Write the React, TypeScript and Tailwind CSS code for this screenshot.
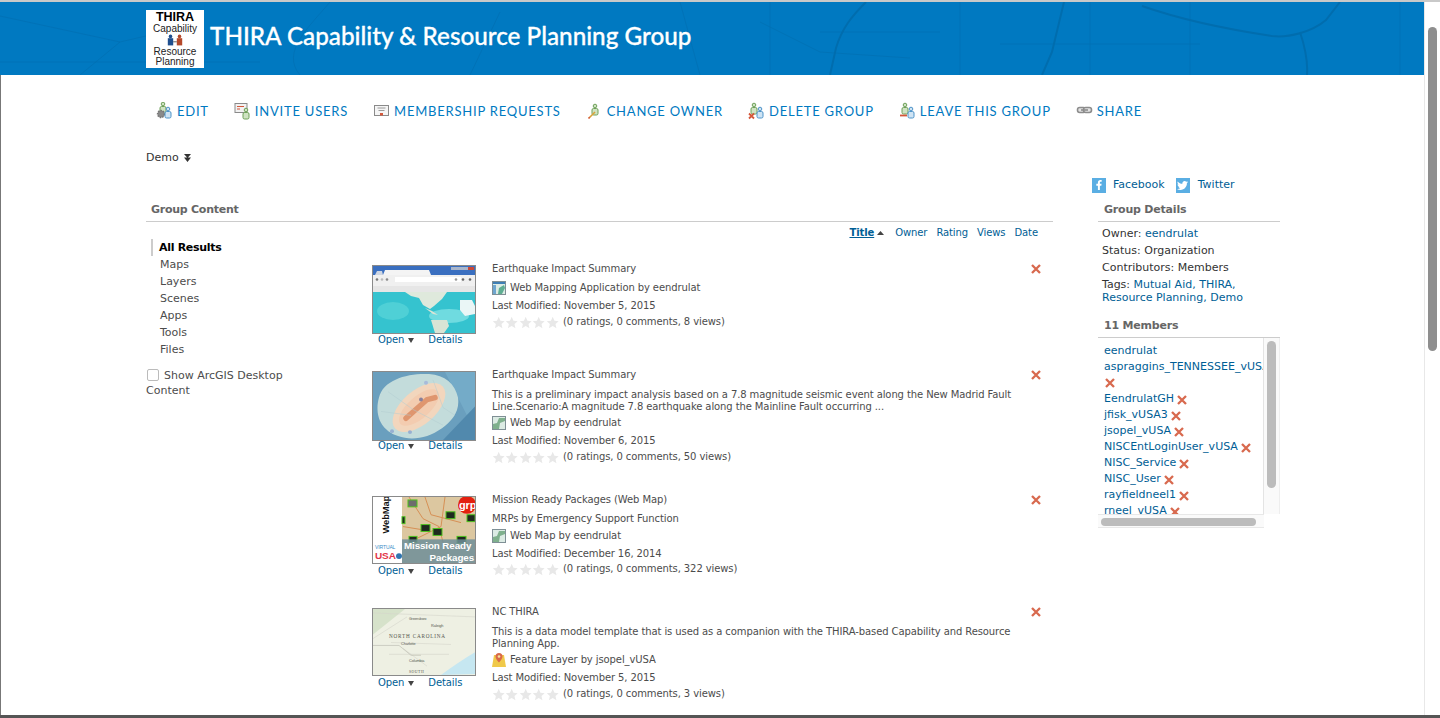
import { FaFacebookF, FaTwitter } from "react-icons/fa"

const Persona = ({ x, y, tipo }: { x: number; y: number; tipo: "verde" | "azul" }) => {
    const borde = tipo === "verde" ? "#6fa15a" : "#4f94c9"
    const relleno = tipo === "verde" ? "#cfe3c2" : "#cfe4f4"
    return (
        <g stroke={borde} fill={relleno} strokeWidth="1">
            <circle cx={x + 3} cy={y + 2} r="1.8" />
            <rect x={x} y={y + 4.5} width="6" height="6.5" rx="1.5" />
        </g>
    )
}

const Tache = ({ x, y, s = 5 }: { x: number; y: number; s?: number }) => (
    <path d={`M${x} ${y}L${x + s} ${y + s}M${x + s} ${y}L${x} ${y + s}`} stroke="#d4573a" strokeWidth="1.8" />
)

const IconoNav = ({ tipo }: { tipo: string }) => (
    <svg width="18" height="18" viewBox="0 0 18 18" fill="none" className="-mt-[2px] shrink-0">
        {tipo === "edit" && (
            <>
                <Persona x={4} y={0} tipo="verde" />
                <circle cx="5" cy="12" r="3.4" fill="#8a8a8a" stroke="#777" strokeDasharray="1.5 1" strokeWidth="1.6" />
                <Persona x={9} y={5} tipo="azul" />
            </>
        )}
        {tipo === "invite" && (
            <>
                <rect x="1" y="1.5" width="12" height="9" fill="#f2f2f2" stroke="#8a8a8a" />
                <path d="M3 4.5h7M3 7h3" stroke="#d4573a" />
                <Persona x={9} y={6} tipo="verde" />
            </>
        )}
        {tipo === "requests" && (
            <>
                <rect x="1.5" y="3.5" width="14" height="10" fill="#f5f5f5" stroke="#8a8a8a" />
                <path d="M4.5 6h8M5.5 8.5h6" stroke="#9a9a9a" />
                <rect x="7" y="11" width="3" height="2.5" fill="#d4573a" />
            </>
        )}
        {tipo === "owner" && (
            <>
                <Persona x={6} y={2} tipo="verde" />
                <path d="M3 16l6-6" stroke="#d8a13a" strokeWidth="1.6" />
                <path d="M2.5 16.5l1.2-1.2" stroke="#d4573a" strokeWidth="1.6" />
            </>
        )}
        {tipo === "delete" && (
            <>
                <Persona x={3} y={1} tipo="verde" />
                <Persona x={9} y={5} tipo="azul" />
                <Tache x={1} y={11.5} />
            </>
        )}
        {tipo === "leave" && (
            <>
                <Persona x={3} y={1} tipo="verde" />
                <Persona x={9} y={5} tipo="azul" />
                <path d="M1 13.5h7" stroke="#d4573a" strokeWidth="1.8" />
            </>
        )}
        {tipo === "share" && (
            <g stroke="#8c8c8c" strokeWidth="1.6" fill="#e3e3e3">
                <rect x="1.5" y="5.5" width="8" height="5" rx="2.2" />
                <rect x="7.5" y="5.5" width="8" height="5" rx="2.2" />
                <path d="M5 8h7" />
            </g>
        )}
    </svg>
)

const acciones = [
    { id: "edit", texto: "EDIT" },
    { id: "invite", texto: "INVITE USERS" },
    { id: "requests", texto: "MEMBERSHIP REQUESTS" },
    { id: "owner", texto: "CHANGE OWNER" },
    { id: "delete", texto: "DELETE GROUP" },
    { id: "leave", texto: "LEAVE THIS GROUP" },
    { id: "share", texto: "SHARE" },
]

const Equis = ({ className }: { className?: string }) => (
    <svg width="10" height="10" viewBox="0 0 10 10" className={className}>
        <path d="M1 1l8 8M9 1l-8 8" stroke="#d8694e" strokeWidth="2.3" />
    </svg>
)

const Estrellas = () => (
    <span className="flex w-[67px] shrink-0">
        {[0, 1, 2, 3, 4].map((i) => (
            <svg key={i} width="13.4" height="13" viewBox="0 0 24 24" fill="#e8e8e8">
                <path d="M12 1.5l3.2 7.2 7.8.8-5.8 5.2 1.7 7.7L12 18.4l-6.9 4 1.7-7.7L1 9.5l7.8-.8z" />
            </svg>
        ))}
    </span>
)

const IconoTipo = ({ tipo }: { tipo: string }) => {
    if (tipo === "layer") {
        return (
            <svg width="14" height="16" viewBox="0 0 14 16" className="shrink-0">
                <path d="M2 3h10l2 12H0z" fill="#f0c94a" />
                <path d="M7 1a3.5 3.5 0 0 1 3.5 3.5C10.500 7 7 10.500 7 10.500S3.500 7 3.500 4.500A3.500 3.500 0 0 1 7 1z" fill="#d9694a" />
                <circle cx="7" cy="4.500" r="1.300" fill="#f6e2a0" />
            </svg>
        )
    }
    return (
        <svg width="14" height="14" viewBox="0 0 14 14" className="shrink-0">
            <rect x="0.500" y="0.500" width="13" height="13" fill="#dcebe4" stroke="#7f8f95" />
            {tipo === "app" && <rect x="1" y="1" width="12" height="2" fill="#3f7fb5" />}
            <path d={tipo === "app" ? "M6 13l1-6 5-3 1 3-3 6z" : "M1 13V8l4-1 2-5 6 0v3l-5 2-1 6z"} fill={tipo === "app" ? "#5fae92" : "#7fb08d"} />
            {tipo === "app" && <rect x="1" y="4" width="3" height="9" fill="#6fa6cf" />}
        </svg>
    )
}

const MiniaturaNavegador = () => (
    <svg viewBox="0 0 102 67" preserveAspectRatio="none" className="block h-full w-full">
        <rect width="102" height="67" fill="#35c3cf" />
        <rect width="102" height="9" fill="#3a6fc0" />
        <rect x="78" y="1" width="23" height="3" fill="#a9b6cc" />
        <rect x="95" y="1" width="6" height="3" fill="#c9483a" />
        <path d="M2 9l2-4h5l1 4z" fill="#cfd6e2" />
        <path d="M10 9l2-5h44l2 5z" fill="#f4f4f4" />
        <rect y="9" width="102" height="11" fill="#f0f0f0" />
        <rect x="22" y="11" width="66" height="5" fill="#fff" />
        <circle cx="4" cy="13.500" r="1.300" fill="#777" />
        <circle cx="9" cy="13.500" r="1.300" fill="#bbb" />
        <circle cx="14" cy="13.500" r="1.300" fill="#888" />
        <circle cx="83" cy="13.500" r="1.300" fill="#999" />
        <circle cx="90" cy="13.500" r="1.300" fill="#666" />
        <circle cx="97" cy="13.500" r="1.300" fill="#666" />
        <rect y="20" width="102" height="6" fill="#e6e6e6" />
        <ellipse cx="20" cy="45" rx="16" ry="9" fill="#4fd0d6" />
        <ellipse cx="76" cy="50" rx="20" ry="7" fill="#6fdbe0" />
        <path d="M32 26h42l-5 7-8 7-4 3-7-4-4-7-8-2z" fill="#dfe9dc" />
        <path d="M52 42l7 3 6 4-5-1z" fill="#d9e4d5" />
        <path d="M58 54h16l2 6-5 7H62z" fill="#d9e4d5" />
        <path d="M87 34h12l3 6v8l-10 2-5-6z" fill="#eaf6f6" />
    </svg>
)

const MiniaturaImpacto = () => (
    <svg viewBox="0 0 102 69" preserveAspectRatio="none" className="block h-full w-full">
        <rect width="102" height="69" fill="#6a9fbe" />
        <path d="M72 0h30v60z" fill="#74abc8" />
        <path d="M102 35v34H70z" fill="#5189ad" />
        <path d="M6 26C10 8 34 1 56 2c16 1 26 10 29 24 2 14-6 24-16 31-14 10-30 13-44 8C5 58 2 40 6 26z" fill="#c3dcdb" />
        <ellipse cx="46" cy="36" rx="32" ry="17" transform="rotate(-42 46 36)" fill="#f2d6bd" />
        <ellipse cx="46" cy="36" rx="25" ry="11" transform="rotate(-42 46 36)" fill="#f3ccb0" />
        <path d="M33 47l21-19 8-2" stroke="#df966f" strokeWidth="5.500" strokeLinecap="round" fill="none" />
        <circle cx="48" cy="28" r="2" fill="#8a809a" />
        <circle cx="53" cy="11" r="2" fill="#a8bbda" />
        <circle cx="19" cy="60" r="2" fill="#98b0d2" />
        <circle cx="37" cy="61" r="2" fill="#98b0d2" />
        <path d="M15 20l25 18 30 16M60 8l10 28 12 8M8 40l30 4" stroke="#b3ccd0" strokeWidth=".5" fill="none" />
    </svg>
)

const MiniaturaPaquetes = () => (
    <svg viewBox="0 0 102 67" preserveAspectRatio="none" className="block h-full w-full">
        <rect width="102" height="67" fill="#fff" />
        <rect x="29" width="73" height="67" fill="#dcc7a0" />
        <path d="M36 0l14 22 16 8 6 24M52 0l6 18 30 8M72 0l-4 30-24 12M30 30l24 4" stroke="#d68f55" strokeWidth="1" fill="none" />
        <g fill="#1f2a1f" stroke="#4fc21f" strokeWidth="1">
            <rect x="35" y="3" width="9" height="7" fill="#6d6d6d" />
            <rect x="29" y="20" width="3" height="7" />
            <rect x="48" y="28" width="9" height="7" />
            <rect x="60" y="32" width="9" height="7" />
            <rect x="73" y="15" width="9" height="7" />
            <rect x="84" y="40" width="9" height="7" />
            <rect x="94" y="18" width="8" height="7" />
            <rect x="36" y="40" width="8" height="6" />
        </g>
        <rect x="29" y="43" width="73" height="24" fill="#6f8e99" opacity=".85" />
        <circle cx="94" cy="8" r="9" fill="#e3200f" />
        <text x="86" y="12" fontSize="11" fontWeight="700" fill="#fff" className="font-['Liberation_Sans',sans-serif]">grp</text>
        <text x="31" y="53" fontSize="9.800" fontWeight="700" fill="#fff" className="font-['Liberation_Sans',sans-serif]">Mission Ready</text>
        <text x="101" y="65" fontSize="9.800" fontWeight="700" fill="#fff" textAnchor="end" className="font-['Liberation_Sans',sans-serif]">Packages</text>
        <text transform="translate(16 37) rotate(-90)" fontSize="9.500" fontWeight="700" fill="#111" className="font-['Liberation_Sans',sans-serif]">WebMap</text>
        <text x="2" y="53" fontSize="5" fill="#3b8dc8" className="font-['Liberation_Sans',sans-serif]">VIRTUAL</text>
        <text x="2" y="63" fontSize="10" fontWeight="700" fill="#e2364a" className="font-['Liberation_Sans',sans-serif]">USA</text>
        <circle cx="26" cy="60" r="3" fill="#2f75b0" />
    </svg>
)

const MiniaturaCarolina = () => (
    <svg viewBox="0 0 102 67" preserveAspectRatio="none" className="block h-full w-full">
        <rect width="102" height="67" fill="#eef0e3" />
        <path d="M0 26L32 0H0z" fill="#d6e2ca" />
        <path d="M102 66V44C92 50 80 58 68 67z" fill="#c6e7f1" />
        <path d="M0 30L34 8M0 4l102 4M18 34l60 2M30 40l24 18M16 46h60" stroke="#d5d5ca" strokeWidth=".6" fill="none" />
        <path d="M0 37h26l12 10h10" stroke="#b8b8ac" strokeWidth=".6" fill="none" />
        <text x="16" y="29" fontSize="5.200" letterSpacing=".8" fill="#55564f" className="font-['Liberation_Serif',serif]">NORTH CAROLINA</text>
        <text x="28" y="37" fontSize="3.800" fill="#55564f" className="font-['Liberation_Sans',sans-serif]">Charlotte</text>
        <text x="58" y="18" fontSize="3.800" fill="#55564f" className="font-['Liberation_Sans',sans-serif]">Raleigh</text>
        <text x="36" y="11" fontSize="3.500" fill="#55564f" className="font-['Liberation_Sans',sans-serif]">Greensboro</text>
        <text x="36" y="54" fontSize="3.800" fill="#55564f" className="font-['Liberation_Sans',sans-serif]">Columbia</text>
        <text x="36" y="65" fontSize="3.800" letterSpacing=".5" fill="#55564f" className="font-['Liberation_Serif',serif]">SOUTH</text>
    </svg>
)

const resultados = [
    {
        titulo: "Earthquake Impact Summary",
        miniatura: <MiniaturaNavegador />,
        iconoTipo: "app",
        tipo: "Web Mapping Application by eendrulat",
        fecha: "November 5, 2015",
        stats: "(0 ratings, 0 comments, 8 views)",
        alto: "h-[69px]",
        margenDesc: "",
        margenTipo: "mt-[5px]",
        margenNota: "mt-[2px]",
        finTexto: "pb-[32px]",
    },
    {
        titulo: "Earthquake Impact Summary",
        miniatura: <MiniaturaImpacto />,
        desc: "This is a preliminary impact analysis based on a 7.8 magnitude seismic event along the New Madrid Fault Line.Scenario:A magnitude 7.8 earthquake along the Mainline Fault occurring ...",
        iconoTipo: "map",
        tipo: "Web Map by eendrulat",
        fecha: "November 6, 2015",
        stats: "(0 ratings, 0 comments, 50 views)",
        alto: "h-[70px]",
        margenDesc: "mt-[7px]",
        margenTipo: "mt-[3px]",
        margenNota: "mt-[2px]",
        finTexto: "pb-[29px]",
    },
    {
        titulo: "Mission Ready Packages (Web Map)",
        miniatura: <MiniaturaPaquetes />,
        desc: "MRPs by Emergency Support Function",
        iconoTipo: "map",
        tipo: "Web Map by eendrulat",
        fecha: "December 16, 2014",
        stats: "(0 ratings, 0 comments, 322 views)",
        alto: "h-[68px]",
        margenDesc: "mt-[6px]",
        margenTipo: "mt-[4px]",
        margenNota: "mt-[1px]",
        finTexto: "pb-[29px]",
    },
    {
        titulo: "NC THIRA",
        miniatura: <MiniaturaCarolina />,
        desc: "This is a data model template that is used as a companion with the THIRA-based Capability and Resource Planning App.",
        iconoTipo: "layer",
        tipo: "Feature Layer by jsopel_vUSA",
        fecha: "November 5, 2015",
        stats: "(0 ratings, 0 comments, 3 views)",
        alto: "h-[68px]",
        margenDesc: "mt-[7px]",
        margenTipo: "mt-[3px]",
        margenNota: "mt-[2px]",
        finTexto: "pb-[10px]",
    },
]

const miembros = [
    "EendrulatGH",
    "jfisk_vUSA3",
    "jsopel_vUSA",
    "NISCEntLoginUser_vUSA",
    "NISC_Service",
    "NISC_User",
    "rayfieldneel1",
    "rneel_vUSA",
]

const Resultado = ({ r }: { r: (typeof resultados)[number] }) => (
    <div className="flex">
        <div className="w-[104px] shrink-0 pb-[22px] pt-[3px]">
            <div className="h-[69px]">
                <div className={`${r.alto} overflow-hidden border border-[#8a8a8a]`}>{r.miniatura}</div>
            </div>
            <div className="flex h-[12px] items-center pl-[6px] leading-[12px] text-[#005e95]">
                <span>Open</span>
                <svg width="6" height="5" viewBox="0 0 6 5" className="ml-[4px]">
                    <path d="M0 0h6L3 5z" fill="#444" />
                </svg>
                <span className="ml-[14px]">Details</span>
            </div>
        </div>
        <div className={`ml-[16px] w-[522px] ${r.finTexto}`}>
            <div className="h-[14px] leading-[14px]">{r.titulo}</div>
            {r.desc && <div className={`${r.margenDesc} leading-[12px]`}>{r.desc}</div>}
            <div className={`flex h-[14px] items-center gap-[4px] ${r.margenTipo}`}>
                <IconoTipo tipo={r.iconoTipo} />
                <span className="-mt-[2px]">{r.tipo}</span>
            </div>
            <div className="mt-[4px] h-[14px] leading-[14px]">Last Modified: {r.fecha}</div>
            <div className={`flex h-[14px] items-center gap-[4px] ${r.margenNota}`}>
                <Estrellas />
                <span className="-mt-[2px]">{r.stats}</span>
            </div>
        </div>
        <Equis className="ml-[17px] mt-[2px] shrink-0" />
    </div>
)

const App = () => {
    return (
        <div className="flex h-[718px] flex-col overflow-hidden border-t-2 border-b-[3px] border-t-[#c9c9c9] border-b-[#555] bg-white font-['DejaVu_Sans',sans-serif] text-[11px] text-[#4c4c4c]">
            <div className="flex min-h-0 flex-1">
                <main className="w-[1424px] shrink-0 border-l border-l-[#777]">
                    <header className="relative -ml-px flex h-[73px] items-center overflow-hidden bg-[#0079c1] pl-[146px]">
                        <svg viewBox="0 0 1424 73" className="absolute inset-0 h-full w-full" fill="none" stroke="#006dae" strokeWidth="1">
                            <path d="M866 0c-14 14-24 26-30 46l-6 27M1064 0l-12 50-10 23M1142 4c40 14 90 24 130 30 16 2 40-4 54-16l14-18M1300 30c6 18 8 30 7 43" strokeWidth="2" />
                            <path d="M0 14l120 26 60-14M120 40l-40 33M330 0c-20 24-50 50-30 73M500 10l-30 63M760 20l60 30 90 6M960 0v73M1190 0v73M1400 0v73M680 0l20 73M0 60h260M1000 42h200M770 0v73M820 30h120M1090 0v73" opacity=".55" />
                        </svg>
                        <div className="relative flex h-[58px] w-[58px] shrink-0 flex-col items-center bg-white pt-[2px] font-['Liberation_Sans',sans-serif] text-[10px] text-[#222]">
                            <span className="h-[11px] text-[12.500px] font-bold leading-[11px] text-black">THIRA</span>
                            <span className="h-[11px] leading-[11px]">Capability</span>
                            <svg width="18" height="12" viewBox="0 0 20 12">
                                <circle cx="5" cy="2" r="2" fill="#1f4f8f" />
                                <rect x="2" y="4" width="6" height="8" fill="#1f4f8f" />
                                <circle cx="15" cy="2" r="2" fill="#b5482a" />
                                <rect x="12" y="4" width="6" height="8" fill="#b5482a" />
                                <path d="M8 8h4" stroke="#555" />
                            </svg>
                            <span className="h-[11px] leading-[11px]">Resource</span>
                            <span className="h-[10px] leading-[10px]">Planning</span>
                        </div>
                        <h1 className="relative ml-[6px] -mt-[5px] font-['Lato',sans-serif] text-[24.250px] font-medium text-white [-webkit-text-stroke:0.3px_white]">THIRA Capability &amp; Resource Planning Group</h1>
                    </header>

                    <nav className="flex gap-[25px] pl-[155px] pt-[28px]">
                        {acciones.map((a) => (
                            <div key={a.id} className="flex h-[18px] items-center gap-[3px]">
                                <IconoNav tipo={a.id} />
                                <span className="font-['Lato',sans-serif] text-[13px] tracking-[.78px] text-[#0079c1]">{a.texto}</span>
                            </div>
                        ))}
                    </nav>

                    <div className="mt-[30px] flex h-[14px] items-center gap-[5px] pl-[145px] text-[#333]">
                        Demo
                        <svg width="7" height="8" viewBox="0 0 7 8">
                            <path d="M0 0h7L3.500 4zM0 3.500h7L3.500 8z" fill="#333" />
                        </svg>
                    </div>

                    <div className="mt-[12px] flex pl-[145px]">
                        <section className="w-[907px] shrink-0">
                            <h2 className="mt-[26px] border-b border-b-[#ccc] pb-[4px] pl-[5px] font-bold leading-[14px] tracking-[-0.25px] text-[#666]">Group Content</h2>
                            <div className="mt-[4px] flex h-[13px] items-center justify-end gap-[9px] pr-[15px] text-[10px] tracking-[-0.1px] text-[#005e95]">
                                <span className="flex items-center gap-[3px] font-bold">
                                    <span className="underline">Title</span>
                                    <svg width="7" height="4" viewBox="0 0 7 4">
                                        <path d="M0 4h7L3.500 0z" fill="#444" />
                                    </svg>
                                </span>
                                <span className="ml-[2px]">Owner</span>
                                <span>Rating</span>
                                <span>Views</span>
                                <span>Date</span>
                            </div>
                            <div className="flex">
                                <aside className="w-[226px] shrink-0">
                                    <ul className="pl-[5px] leading-[17px]">
                                        <li className="border-l-2 border-l-[#ccc] pl-[6px] font-bold tracking-[-0.3px] text-black">All Results</li>
                                        {["Maps", "Layers", "Scenes", "Apps", "Tools", "Files"].map((t) => (
                                            <li key={t} className="pl-[9px]">{t}</li>
                                        ))}
                                    </ul>
                                    <div className="mt-[10px] w-[160px] leading-[15px]">
                                        <span className="mr-[5px] ml-px inline-block h-[12px] w-[12px] rounded-[2px] border border-[#bbb] bg-white align-[-2px]"></span>
                                        Show ArcGIS Desktop Content
                                    </div>
                                </aside>
                                <div className="min-w-0 flex-1 pt-[23px] text-[10px] tracking-[-0.1px]">
                                    {resultados.map((r, i) => (
                                        <Resultado key={i} r={r} />
                                    ))}
                                </div>
                            </div>
                        </section>

                        <section className="ml-[39px] w-[188px] shrink-0">
                            <div className="flex h-[16px] items-center text-[#005e95]">
                                <span className="flex h-[15px] w-[14px] items-center justify-center bg-[#5aaee3] text-white"><FaFacebookF size={10} /></span>
                                <span className="ml-[7px]">Facebook</span>
                                <span className="ml-[11px] flex h-[15px] w-[14px] items-center justify-center bg-[#5aaee3] text-white"><FaTwitter size={11} /></span>
                                <span className="ml-[8px]">Twitter</span>
                            </div>
                            <div className="ml-[6px] w-[182px]">
                                <h2 className="mt-[10px] border-b border-b-[#ccc] pb-[4px] pl-[6px] font-bold leading-[14px] tracking-[-0.2px] text-[#666]">Group Details</h2>
                                <div className="pl-[4px] pt-[3px] text-[#333]">
                                    <div className="leading-[17px]">Owner: <span className="text-[#005e95]">eendrulat</span></div>
                                    <div className="leading-[17px]">Status: Organization</div>
                                    <div className="leading-[17px]">Contributors: Members</div>
                                    <div className="mt-[2px] leading-[13px]">
                                        Tags: <span className="text-[#005e95]">Mutual Aid, THIRA,</span>
                                        <br />
                                        <span className="text-[#005e95]">Resource Planning, Demo</span>
                                    </div>
                                </div>
                                <h2 className="mt-[15px] border-b border-b-[#ccc] pb-[4px] pl-[6px] font-bold leading-[14px] tracking-[-0.2px] text-[#666]">11 Members</h2>
                                <div className="flex h-[176px]">
                                    <div className="w-[166px] shrink-0 overflow-hidden border-r border-r-[#e4e4e4] pl-[6px] pt-[5px] leading-[16px] text-[#005e95]">
                                        <div>eendrulat</div>
                                        <div className="whitespace-nowrap">aspraggins_TENNESSEE_vUSA3</div>
                                        <div className="flex h-[16px] items-center pl-[1px]"><Equis /></div>
                                        {miembros.map((m) => (
                                            <div key={m} className="flex h-[16px] items-center gap-[3px]">
                                                <span>{m}</span>
                                                <Equis className="mt-[2px]" />
                                            </div>
                                        ))}
                                    </div>
                                    <div className="w-[16px] border-r border-r-[#eee] bg-[#fafafa] px-[3px] pt-[3px]">
                                        <div className="h-[147px] rounded-[5px] bg-[#bcbcbc]"></div>
                                    </div>
                                </div>
                                <div className="h-[14px] w-[166px] border-y border-y-[#e8e8e8] bg-[#fafafa] px-[3px] pt-[3px]">
                                    <div className="h-[8px] w-[155px] rounded-[4px] bg-[#bcbcbc]"></div>
                                </div>
                            </div>
                        </section>
                    </div>
                </main>
                <div className="w-[16px] shrink-0 border-l border-l-[#e8e8e8] bg-white pl-[3px] pt-[25px]">
                    <div className="h-[324px] w-[9px] rounded-[5px] bg-[#8e8e8e]"></div>
                </div>
            </div>
        </div>
    )
}

export default App
